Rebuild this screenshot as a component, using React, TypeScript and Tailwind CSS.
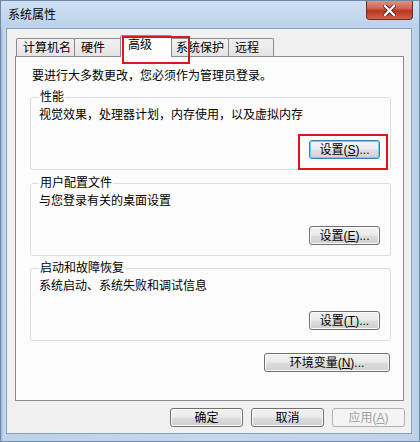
import type { ReactNode } from "react";

const font = "font-['Liberation_Sans','Noto_Sans_CJK_SC',sans-serif]";

function Btn({
  children,
  w,
  focus,
  disabled,
}: {
  children: ReactNode;
  w: string;
  focus?: boolean;
  disabled?: boolean;
}) {
  let look =
    "border-[#707070] text-black bg-[linear-gradient(#f2f2f2_0%,#ebebeb_48%,#dddddd_52%,#cfcfcf_100%)] shadow-[inset_0_0_0_1px_#fbfbfb]";
  if (focus)
    look =
      "border-[#3c7fb1] text-black bg-[linear-gradient(#f4f4f4_0%,#ececec_48%,#dedede_52%,#d2d2d2_100%)] shadow-[inset_0_0_0_1px_#62d4f5]";
  if (disabled) look = "border-[#adb2b5] text-[#a0a0a0] bg-[#f4f4f4]";
  return (
    <button
      className={`${w} h-[19px] rounded-[3px] border flex items-center justify-center text-[12px] leading-none ${look}`}
    >
      {children}
    </button>
  );
}

function Group({
  title,
  desc,
  btn,
  focus,
  className,
}: {
  title: string;
  desc: string;
  btn: ReactNode;
  focus?: boolean;
  className?: string;
}) {
  return (
    <fieldset
      className={`ml-[14px] mr-[12px] border border-[#d5dfe5] rounded-[3px] pl-[8px] pr-[10px] pb-[10px] ${className ?? ""}`}
    >
      <legend className="px-[1px] text-[12px] leading-[14px] text-black">{title}</legend>
      <div className="mt-[4px] text-[12px] leading-[14px] text-black">{desc}</div>
      <div className="mt-[18px] flex justify-end">
        <Btn w="w-[71px]" focus={focus}>
          {btn}
        </Btn>
      </div>
    </fieldset>
  );
}

const tabs = ["计算机名", "硬件", "高级", "系统保护", "远程"];
const tabW = ["w-[59px]", "w-[48px]", "w-[52px]", "w-[60px]", "w-[46px]"];

export default function App() {
  return (
    <div className={`relative w-[420px] h-[442px] overflow-hidden ${font}`}>
      {/* window frame */}
      <div className="w-full h-full flex flex-col border border-[#6f8aa8] bg-[linear-gradient(90deg,#9fb8d6_0px,#c7daf0_3px,#bcd1ea_6px,#c4d8ee_50%,#bed3eb_100%)]">
        {/* title bar */}
        <div className="h-[27px] flex justify-between bg-[linear-gradient(#d0e0f3,#bbd1eb)]">
          <div className="pl-[7px] pt-[7px] text-[12px] leading-[14px] text-black">系统属性</div>
          <div className="mr-[6px] w-[47px] h-[19px] rounded-b-[4px] border border-t-0 border-[#6b2a22] bg-[linear-gradient(#dc9482_0%,#cf6652_40%,#b8371f_55%,#cc644d_100%)] flex items-center justify-center">
            <svg width="13" height="11" viewBox="0 0 13 11">
              <path
                d="M2 1 L11 10 M11 1 L2 10"
                stroke="#4a1a14"
                strokeWidth="4"
                strokeLinecap="square"
              />
              <path
                d="M2 1 L11 10 M11 1 L2 10"
                stroke="#ffffff"
                strokeWidth="2.4"
                strokeLinecap="square"
              />
            </svg>
          </div>
        </div>

        {/* client area */}
        <div className="ml-[5px] mr-[7px] mb-[7px] flex-1 flex flex-col border border-[#8ba0bc] bg-[#f0f0f0]">
          {/* tabs */}
          <div className="pl-[9px] pt-[6px] h-[27px] flex items-end">
            {tabs.map((t, i) =>
              i === 2 ? (
                <div
                  key={t}
                  className={`${tabW[i]} -mx-[2px] -mb-[1px] h-[22px] relative z-10 border border-b-0 border-[#898c95] bg-white rounded-t-[2px] pl-[7px] pt-[2px] text-[12px] leading-[14px] text-black`}
                >
                  {t}
                </div>
              ) : (
                <div
                  key={t}
                  className={`${tabW[i]} h-[18px] border border-b-0 border-[#898c95] -ml-px first:ml-0 rounded-t-[2px] bg-[linear-gradient(#f2f2f2,#e3e3e3)] pl-[6px] pt-[2px] text-[12px] leading-[14px] text-black`}
                >
                  {t}
                </div>
              )
            )}
          </div>

          {/* tab panel */}
          <div className="ml-[8px] mr-[7px] h-[345px] border border-[#898c95] bg-[#fcfcfc] flex flex-col pt-[12px]">
            <div className="pl-[16px] text-[12px] leading-[14px] text-black">
              要进行大多数更改，您必须作为管理员登录。
            </div>
            <Group
              className="mt-[7px]"
              title="性能"
              desc="视觉效果，处理器计划，内存使用，以及虚拟内存"
              focus
              btn={
                <span>
                  设置(<u>S</u>)...
                </span>
              }
            />
            <Group
              className="mt-[6px]"
              title="用户配置文件"
              desc="与您登录有关的桌面设置"
              btn={
                <span>
                  设置(<u>E</u>)...
                </span>
              }
            />
            <Group
              className="mt-[5px]"
              title="启动和故障恢复"
              desc="系统启动、系统失败和调试信息"
              btn={
                <span>
                  设置(<u>T</u>)...
                </span>
              }
            />
            <div className="mt-[12px] mr-[13px] flex justify-end">
              <Btn w="w-[126px]">
                <span>
                  环境变量(<u>N</u>)...
                </span>
              </Btn>
            </div>
          </div>

          {/* dialog buttons */}
          <div className="mt-[7px] mr-[6px] flex justify-end gap-[8px]">
            <Btn w="w-[73px]">确定</Btn>
            <Btn w="w-[73px]">取消</Btn>
            <Btn w="w-[73px]" disabled>
              <span>
                应用(<u>A</u>)
              </span>
            </Btn>
          </div>
        </div>
      </div>

      {/* red annotation boxes */}
      <div className="absolute left-[122px] top-[36px] w-[68px] h-[28px] border-2 border-[#e0141c] pointer-events-none z-20" />
      <div className="absolute left-[298px] top-[134px] w-[90px] h-[36px] border-2 border-[#e0141c] pointer-events-none z-20" />
    </div>
  );
}
